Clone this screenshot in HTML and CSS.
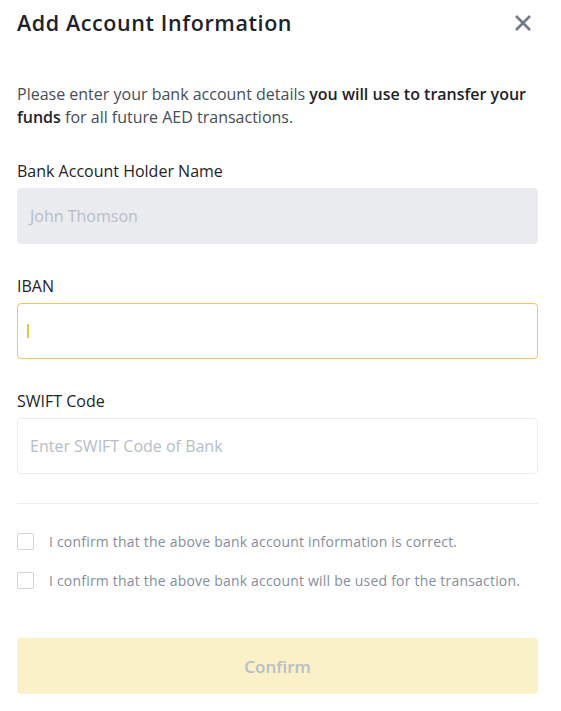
FILE: index.html
```html
<!DOCTYPE html>
<html lang="en">
<head>
<meta charset="utf-8">
<title>Add Account Information</title>
<link rel="stylesheet" href="styles.css">
</head>
<body>
<div class="modal">
  <div class="header">
    <h1 class="title">Add Account Information</h1>
    <button class="close" aria-label="Close">
      <svg width="18" height="18" viewBox="0 0 18 18"><path d="M2 2 L16 16 M16 2 L2 16" stroke="#707A8A" stroke-width="2.6" stroke-linecap="butt"/></svg>
    </button>
  </div>
  <p class="intro">Please enter your bank account details <b>you will use to transfer your funds</b> for all future AED transactions.</p>

  <div class="field first">
    <label class="label">Bank Account Holder Name</label>
    <div class="input disabled">John Thomson</div>
  </div>

  <div class="field">
    <label class="label">IBAN</label>
    <div class="input focused"><span class="caret"></span></div>
  </div>

  <div class="field">
    <label class="label">SWIFT Code</label>
    <div class="input"><span class="placeholder">Enter SWIFT Code of Bank</span></div>
  </div>

  <hr class="divider">

  <div class="checks">
    <label class="check"><span class="box"></span><span class="check-text">I confirm that the above bank account information is correct.</span></label>
    <label class="check"><span class="box"></span><span class="check-text">I confirm that the above bank account will be used for the transaction.</span></label>
  </div>

  <button class="confirm">Confirm</button>
</div>
</body>
</html>
```
FILE: styles.css
```css
* { box-sizing: border-box; }
html, body { margin: 0; padding: 0; background: #fff; }
body { font-family: "Open Sans", "Noto Sans", "Liberation Sans", sans-serif; color: #1E2329; }
.modal { width: 561px; padding: 9px 23px 0 17px; }
.header { display: flex; align-items: center; justify-content: space-between; height: 28px; }
.title { margin: 0; font-size: 21.5px; line-height: 28px; font-weight: 600; color: #1E2329; letter-spacing: 0.6px; }
.close { border: 0; background: none; padding: 0; width: 18px; height: 18px; display: flex; margin-right: 6px; }
.intro { margin: 46px 0 0; font-size: 16px; line-height: 23px; color: #474D57; }
.intro b { font-weight: 600; color: #1E2329; }
.field { display: flex; flex-direction: column; margin-top: 32px; }
.label { font-size: 16px; line-height: 20px; color: #1E2329; margin-bottom: 7px; }
.input { height: 56px; border: 1px solid #EAECEF; border-radius: 4px; display: flex; align-items: center; padding: 0 12px; font-size: 16px; }
.input.disabled { background: #EAECEF; color: #B7BDC6; }
.input.focused { border-color: #F2CB4E; }
.caret { width: 1.5px; height: 14px; background: #F0C341; margin-left: -3px; }
.placeholder { color: #B7BDC6; }
.divider { border: 0; border-top: 1px solid #EAECEF; margin: 29px 0 0; }
.checks { display: flex; flex-direction: column; gap: 22px; margin-top: 29px; }
.check { display: flex; align-items: center; gap: 15px; height: 17px; }
.box { width: 17px; height: 17px; border: 1px solid #D0D4DA; border-radius: 2px; flex: none; }
.check-text { font-size: 14px; color: #848E9C; letter-spacing: 0.2px; }
.confirm { display: block; width: 100%; height: 56px; margin-top: 49px; border: 0; border-radius: 4px; background: #FBF1C8; color: #B7BDC6; font-family: inherit; font-size: 17px; font-weight: 600; }
```
